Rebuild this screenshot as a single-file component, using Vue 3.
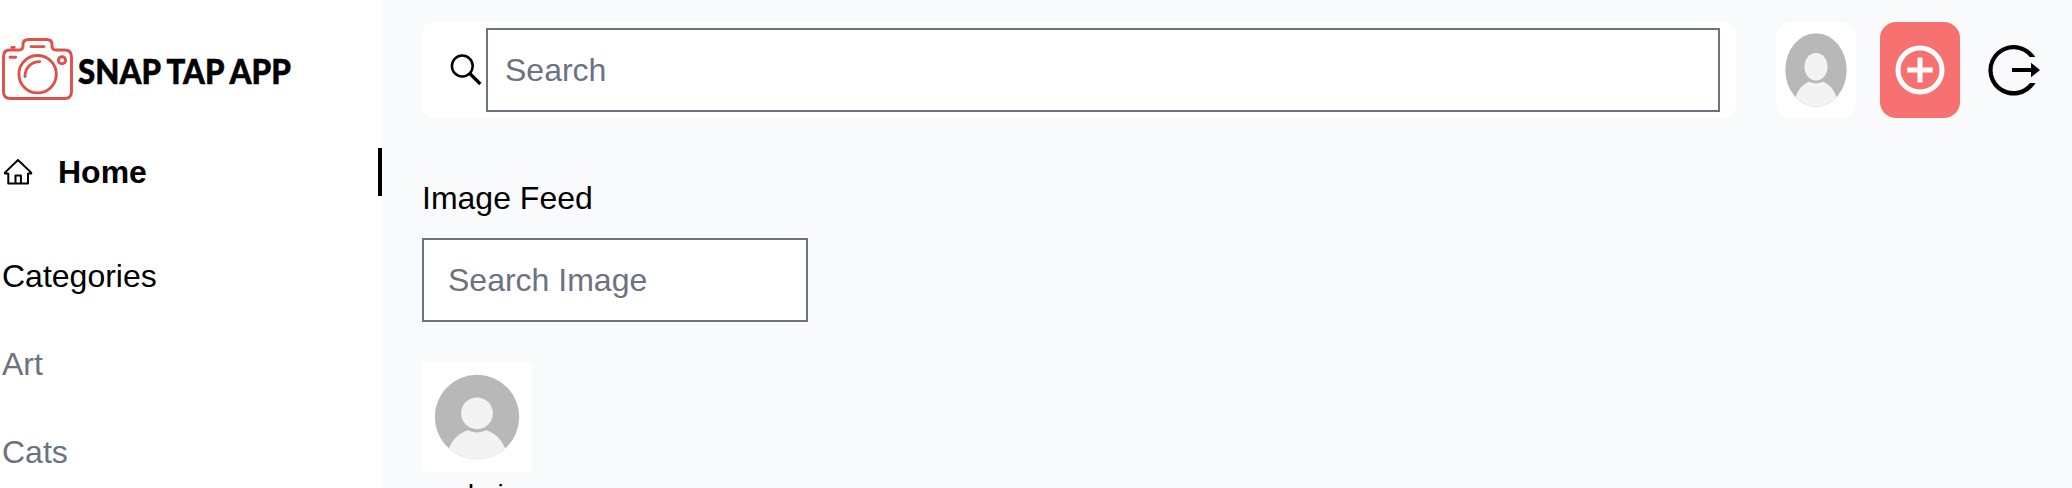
<script setup>
const categories = ['Art', 'Cats']
</script>

<template>
  <div class="app">
    <aside class="sidebar">
      <svg class="logo" viewBox="0 0 300 72" aria-label="Snap Tap App">
        <g fill="none" stroke="#e0504a" stroke-width="2.900" stroke-linecap="round" stroke-linejoin="round">
          <path d="M9.500 16H19Q23 16 23 12V10.500Q23 5.500 28.500 5.500H46.500Q52 5.500 52 10.500V12Q52 16 56 16H64.500Q71.500 16 71.500 23V57.500Q71.500 64.500 64.500 64.500H10.500Q3.500 64.500 3.500 57.500V23Q3.500 16 9.500 16Z" />
          <path d="M31 12.600H44M10 23.300H15.700M11.800 13.400H14.200" />
          <circle cx="37.600" cy="40.200" r="18.700" />
          <path d="M25 42.500C25 33.500 31.500 27.600 39.700 27.600" />
          <circle cx="62" cy="26.300" r="3.600" />
        </g>
        <g class="logo-text">
          <text x="78" y="50" textLength="83" lengthAdjust="spacingAndGlyphs">SNAP</text>
          <text x="166.500" y="50" textLength="58" lengthAdjust="spacingAndGlyphs">TAP</text>
          <text x="229.500" y="50" textLength="61.500" lengthAdjust="spacingAndGlyphs">APP</text>
        </g>
      </svg>

      <div class="home">
        <svg class="home-icon" viewBox="0 0 36 36" fill="none" stroke="#000" stroke-width="2" stroke-linejoin="round">
          <path d="M8.300 19V29.600H28V19" />
          <path d="M8.300 19.500H4.900V18.600L18 6L31.200 18.600V19.500H28" />
          <path d="M15.500 29.600V21.500H20.900V29.600" />
        </svg>
        <span>Home</span>
      </div>

      <h3 class="heading">Categories</h3>
      <nav class="categories">
        <a v-for="c in categories" :key="c">{{ c }}</a>
      </nav>
    </aside>

    <main class="content">
      <header class="topbar">
        <div class="search">
          <svg class="search-icon" viewBox="0 0 42 42" fill="none" stroke="#000">
            <circle cx="18.300" cy="17" r="10.400" stroke-width="2.500" />
            <path d="M25.300 24L36.300 35" stroke-width="3.200" />
          </svg>
          <input type="text" placeholder="Search" />
        </div>
        <svg class="header-avatar" viewBox="0 0 110 110" preserveAspectRatio="none">
          <defs>
            <clipPath id="disc"><circle cx="55" cy="55" r="42.200" /></clipPath>
            <symbol id="person" viewBox="0 0 110 110" preserveAspectRatio="none">
              <rect width="110" height="110" fill="#fff" />
              <g clip-path="url(#disc)">
                <rect width="110" height="110" fill="#b8b8b8" />
                <circle cx="55" cy="96.600" r="29.900" fill="#f3f3f3" />
                <circle cx="55" cy="51.300" r="19.200" fill="#b8b8b8" />
                <circle cx="55" cy="51.300" r="15.900" fill="#f3f3f3" />
              </g>
            </symbol>
          </defs>
          <use href="#person" width="110" height="110" />
        </svg>
        <div class="add">
          <svg viewBox="0 0 60 60" fill="none" stroke="#fff" stroke-width="5">
            <circle cx="30" cy="30" r="22" />
            <path d="M17.300 30H42.700M30 17.500V42.500" />
          </svg>
        </div>
        <svg class="logout" viewBox="0 0 60 60">
          <path d="M51.200 17A25.300 25.300 0 1 0 51.500 43H46A20.900 20.900 0 1 1 45.700 17Z" />
          <path d="M28 28H47V22.800L56 30L47 37.200V32H28Z" />
        </svg>
      </header>

      <section class="feed">
        <h2 class="heading">Image Feed</h2>
        <input class="image-search" type="text" placeholder="Search Image" />
        <div class="user">
          <svg class="feed-avatar" viewBox="0 0 110 110">
            <use href="#person" width="110" height="110" />
          </svg>
          <p class="username">admin</p>
        </div>
      </section>
    </main>
  </div>
</template>

<style>
body { margin: 0; overflow: hidden; }
</style>

<style scoped>
.app {
  display: flex;
  width: 100%;
  height: 488px;
  overflow: hidden;
  background: #f9fafb;
  color: #000;
  font-family: "Liberation Sans", Arial, sans-serif;
  font-size: 32px;
  line-height: 48px;
}
svg { display: block; flex: none; }
input {
  box-sizing: border-box;
  display: block;
  height: 84px;
  margin: 0;
  border: 2px solid #6b7280;
  border-radius: 0;
  background: #fff;
  font: inherit;
  outline: none;
}
input::placeholder { color: #6b7280; opacity: 1; }
.heading { margin: 0; font-size: 32px; font-weight: 400; }
.sidebar {
  box-sizing: border-box;
  flex: none;
  width: 382px;
  padding-top: 34px;
  background: #fff;
}
.logo { width: 300px; height: 72px; }
.logo-text {
  font-family: Lato, sans-serif;
  font-weight: 900;
  font-size: 34px;
  stroke: #000;
  stroke-width: 0.5px;
}
.home {
  display: flex;
  align-items: center;
  box-sizing: border-box;
  height: 48px;
  margin: 42px 0 56px;
  border-right: 4px solid #000;
  font-weight: 700;
}
.home-icon { width: 36px; height: 36px; margin-right: 22px; }
.sidebar .heading { padding-left: 2px; }
.categories {
  display: flex;
  flex-direction: column;
  gap: 40px;
  padding: 40px 0 0 2px;
  color: #6b7280;
}
.content { flex: 1; min-width: 0; padding: 22px 16px 0 40px; }
.topbar { display: flex; align-items: center; height: 96px; }
.search {
  display: flex;
  align-items: center;
  box-sizing: border-box;
  flex: 1;
  height: 96px;
  padding: 0 16px 0 22px;
  border-radius: 12px;
  background: #fff;
}
.search-icon { width: 42px; height: 42px; }
.search input { flex: 1; min-width: 0; padding: 0 16px 0 17px; }
.header-avatar { width: 80px; height: 96px; margin: 0 24px 0 40px; border-radius: 16px; }
.add {
  display: flex;
  align-items: center;
  justify-content: center;
  width: 80px;
  height: 96px;
  border-radius: 16px;
  background: #f87171;
}
.add svg { width: 60px; height: 60px; }
.logout { width: 60px; height: 60px; margin: 0 12px 0 24px; }
.feed { padding-top: 56px; }
.image-search { width: 386px; margin-top: 16px; padding: 0 24px; }
.user { width: 110px; margin-top: 40px; }
.feed-avatar { width: 110px; height: 110px; }
.username { margin: 3px 0 0; padding-left: 21px; font-size: 28px; line-height: 40px; }
</style>
